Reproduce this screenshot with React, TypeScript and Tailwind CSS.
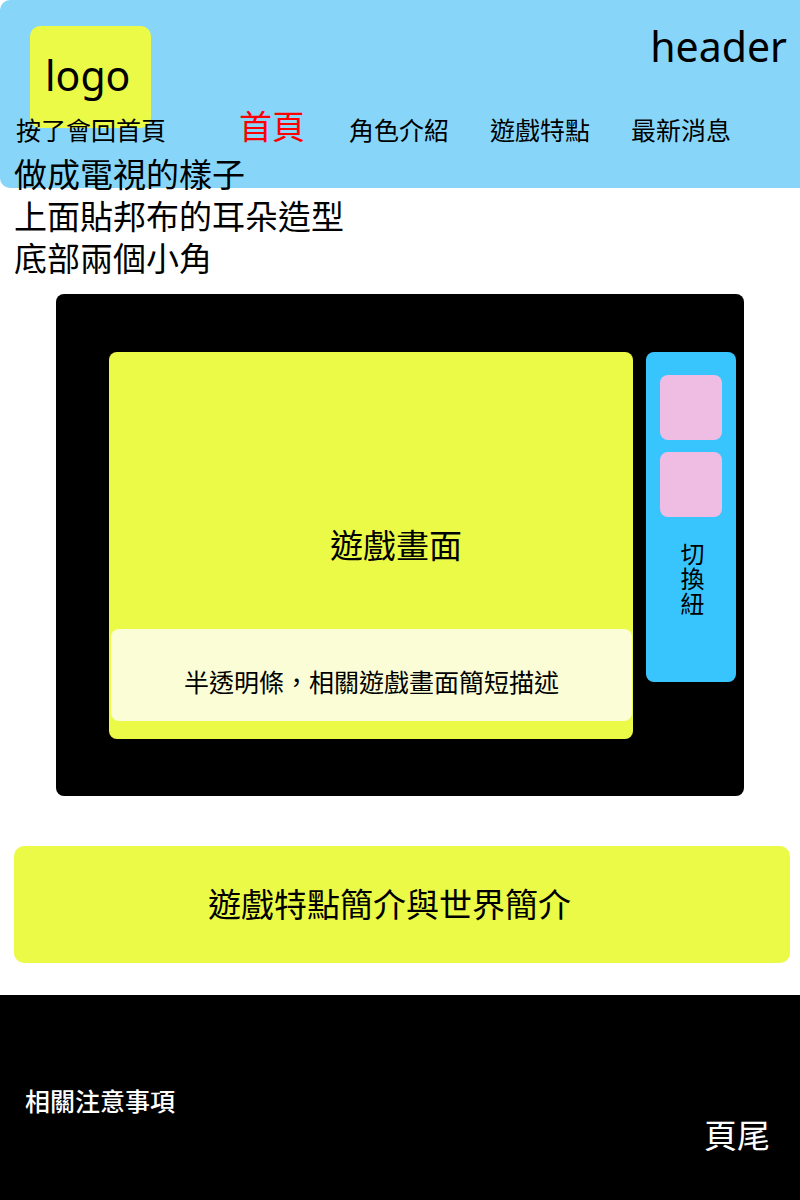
const NAV_ITEMS = ['角色介紹', '遊戲特點', '最新消息'];

const NOTES = ['做成電視的樣子', '上面貼邦布的耳朵造型', '底部兩個小角'];

export default function App() {
  return (
    <div className="w-[800px] min-h-[1200px] bg-white text-black font-['Noto_Sans','Noto_Sans_CJK_TC',sans-serif]">
      {/* header */}
      <header className="h-[188px] bg-[#87d6fa] rounded-l-[10px]">
        <div className="flex justify-between pl-[30px] pr-[13px] pt-[26px]">
          <div className="w-[121px] h-[102px] bg-[#ebfa46] rounded-[10px] pl-[15px] pt-[25px]">
            <span className="text-[41px] leading-[48px]">logo</span>
          </div>
          <div className="text-[41px] leading-[48px] -mt-[4px]">header</div>
        </div>

        <nav className="flex items-end -mt-[18px] pl-[16px] h-[33px]">
          <a className="text-[25px] leading-none mr-[73px]">按了會回首頁</a>
          <a className="text-[33px] leading-none text-[#ff0000] mr-[44px]">首頁</a>
          <div className="flex items-end gap-[41px]">
            {NAV_ITEMS.map((item) => (
              <a key={item} className="text-[25px] leading-none">
                {item}
              </a>
            ))}
          </div>
        </nav>

        <div className="mt-[11px] pl-[14px] text-[33px] leading-[42px]">
          {NOTES.map((n) => (
            <p key={n}>{n}</p>
          ))}
        </div>
      </header>

      {/* tv */}
      <section className="mt-[106px] ml-[56px] w-[688px] h-[502px] bg-black rounded-[8px] pt-[58px] pl-[53px] flex items-start gap-[13px]">
        <div className="relative w-[524px] h-[387px] bg-[#ebfa46] rounded-[8px] flex items-center justify-center pl-[50px]">
          <span className="text-[33px] leading-none">遊戲畫面</span>
          <div className="absolute left-[2px] right-[1px] bottom-[18px] h-[92px] bg-[#fafdd5] rounded-[8px] flex items-center justify-center pt-[14px]">
            <span className="text-[25px] leading-none">半透明條，相關遊戲畫面簡短描述</span>
          </div>
        </div>

        <div className="w-[90px] h-[330px] bg-[#38c5fe] rounded-[8px] flex flex-col items-center pt-[23px]">
          <div className="w-[62px] h-[65px] bg-[#efbde3] rounded-[8px]" />
          <div className="w-[62px] h-[65px] bg-[#efbde3] rounded-[8px] mt-[12px]" />
          <span className="mt-[25px] text-[24px] leading-none tracking-[1px] [writing-mode:vertical-rl]">切換紐</span>
        </div>
      </section>

      {/* intro */}
      <section className="mt-[50px] ml-[14px] w-[776px] h-[117px] bg-[#ebfa46] rounded-[10px] flex items-center justify-center pr-[25px]">
        <h2 className="text-[33px] leading-none">遊戲特點簡介與世界簡介</h2>
      </section>

      {/* footer */}
      <footer className="mt-[32px] h-[205px] bg-black text-white flex flex-col pt-[94px] pl-[25px] pr-[30px]">
        <p className="text-[25px] leading-none font-medium">相關注意事項</p>
        <p className="self-end mt-[5px] text-[33px] leading-none">頁尾</p>
      </footer>
    </div>
  );
}
